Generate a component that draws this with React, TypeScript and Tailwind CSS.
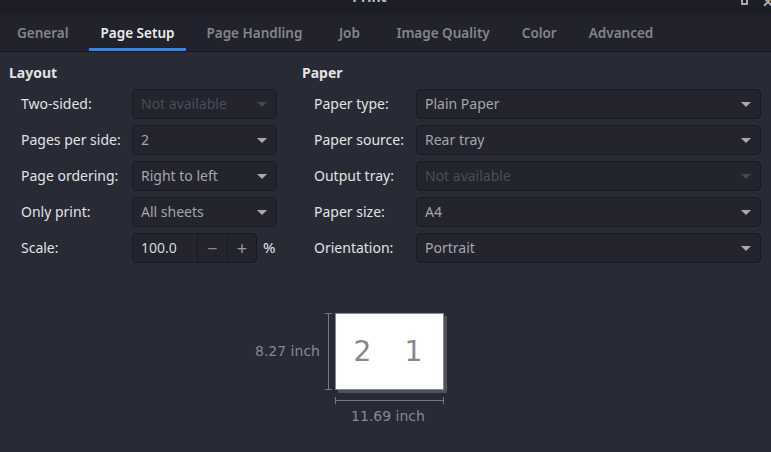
import React from "react"

const tabs = ["General", "Page Setup", "Page Handling", "Job", "Image Quality", "Color", "Advanced"]

const layoutRows = [
  { label: "Two-sided:", value: "Not available", disabled: true },
  { label: "Pages per side:", value: "2" },
  { label: "Page ordering:", value: "Right to left" },
  { label: "Only print:", value: "All sheets" },
]

const paperRows = [
  { label: "Paper type:", value: "Plain Paper" },
  { label: "Paper source:", value: "Rear tray" },
  { label: "Output tray:", value: "Not available", disabled: true },
  { label: "Paper size:", value: "A4" },
  { label: "Orientation:", value: "Portrait" },
]

function Arrow({ disabled }: { disabled?: boolean }) {
  return (
    <svg width="10" height="5" viewBox="0 0 10 5" className="shrink-0">
      <path d="M0 0h10L5 5z" fill={disabled ? "#454855" : "#a9abb1"} />
    </svg>
  )
}

function Combo({ value, disabled, className = "" }: { value: string; disabled?: boolean; className?: string }) {
  return (
    <div
      className={`flex h-[30px] items-center justify-between rounded-[5px] border border-[#191a21] bg-[#23242e] pl-[8px] pr-[9px] ${className}`}
    >
      <span className={`-mt-px ${disabled ? "text-[#4a4d59]" : "text-[#a4a6ac]"}`}>{value}</span>
      <Arrow disabled={disabled} />
    </div>
  )
}

export default function App() {
  return (
    <div
      className="flex h-[452px] w-[771px] flex-col overflow-hidden bg-[#282a35] text-[14px] text-[#e2e2e4]"
      style={{ fontFamily: '"Noto Sans", "Open Sans", sans-serif' }}
    >
      {/* title bar */}
      <div className="relative flex h-[15px] shrink-0 justify-center overflow-hidden bg-[#1c1d25] pr-[32px]">
        <span className="-mt-[13px] text-[14px] font-bold leading-[20px] text-[#b9bbc2]">Print</span>
        <div className="absolute right-[23px] top-[-4px] h-[9px] w-[7px] border-2 border-[#a6a8ae]" />
        <span className="absolute right-[-3px] top-[-9px] text-[14px] font-bold text-[#a6a8ae]">✕</span>
      </div>

      {/* tabs */}
      <div className="flex h-[37px] shrink-0 items-stretch border-b border-[#17181f] bg-[#21222b] pl-px text-[13.5px]">
        {tabs.map((t) => {
          const active = t === "Page Setup"
          return (
            <div
              key={t}
              className={`mx-1 flex min-w-[54px] items-center justify-center px-3 font-semibold ${
                active ? "border-b-[3px] border-[#3584e4] pt-[3px] text-[#ececee]" : "text-[#83858d]"
              }`}
            >
              {t}
            </div>
          )
        })}
      </div>

      {/* settings */}
      <div className="flex gap-[25px] pl-[9px] pr-[10px] pt-[11px]">
        <div className="flex w-[268px] flex-col">
          <div className="h-[20px] font-bold leading-[20px]">Layout</div>
          <div className="mt-[6px] flex flex-col gap-[6px] pl-[12px]">
            {layoutRows.map((r) => (
              <div key={r.label} className="flex items-center">
                <span className="-mt-px w-[111px]">{r.label}</span>
                <Combo value={r.value} disabled={r.disabled} className="w-[145px]" />
              </div>
            ))}
            <div className="flex items-center">
              <span className="-mt-px w-[111px]">Scale:</span>
              <div className="flex h-[30px] w-[125px] items-stretch rounded-[5px] border border-[#191a21] bg-[#23242e]">
                <span className="-mt-px flex flex-1 items-center pl-[8px] text-[#d8d9dc]">100.0</span>
                <span className="flex w-[30px] items-center justify-center border-l border-[#191a21] text-[18px] text-[#8a8c92]">
                  −
                </span>
                <span className="flex w-[29px] items-center justify-center border-l border-[#191a21] text-[18px] text-[#9a9ca2]">
                  +
                </span>
              </div>
              <span className="-mt-px ml-[6px] text-[15px]">%</span>
            </div>
          </div>
        </div>

        <div className="flex flex-1 flex-col">
          <div className="h-[20px] font-bold leading-[20px]">Paper</div>
          <div className="mt-[6px] flex flex-col gap-[6px] pl-[12px]">
            {paperRows.map((r) => (
              <div key={r.label} className="flex items-center">
                <span className="-mt-px w-[102px] shrink-0">{r.label}</span>
                <Combo value={r.value} disabled={r.disabled} className="flex-1" />
              </div>
            ))}
          </div>
        </div>
      </div>

      {/* preview */}
      <div
        className="mt-[50px] flex pl-[255px] text-[#878990]"
        style={{ fontFamily: '"DejaVu Sans", sans-serif' }}
      >
        <div className="flex h-[77px] items-center">
          <span className="w-[66px] text-[14px]">8.27 inch</span>
          <div className="ml-[4px] flex h-[77px] w-[7px] flex-col items-center justify-between">
            <div className="h-px w-[7px] bg-[#777980]" />
            <div className="w-px flex-1 bg-[#777980]" />
            <div className="h-px w-[7px] bg-[#777980]" />
          </div>
        </div>
        <div className="ml-[3px] flex flex-col">
          <div className="flex h-[77px] w-[109px] border border-[#86888e] bg-white text-[28px] text-[#85878c] shadow-[3px_3px_0_#50525a]">
            <span className="flex flex-1 items-center justify-center pl-[1px]">2</span>
            <span className="flex flex-1 items-center justify-center pr-[4px]">1</span>
          </div>
          <div className="mt-[7px] flex h-[7px] w-[109px] items-center">
            <div className="h-[7px] w-px bg-[#777980]" />
            <div className="h-px flex-1 bg-[#777980]" />
            <div className="h-[7px] w-px bg-[#777980]" />
          </div>
          <span className="mt-[2px] pr-[3px] text-center text-[14px] leading-[20px]">11.69 inch</span>
        </div>
      </div>
    </div>
  )
}
